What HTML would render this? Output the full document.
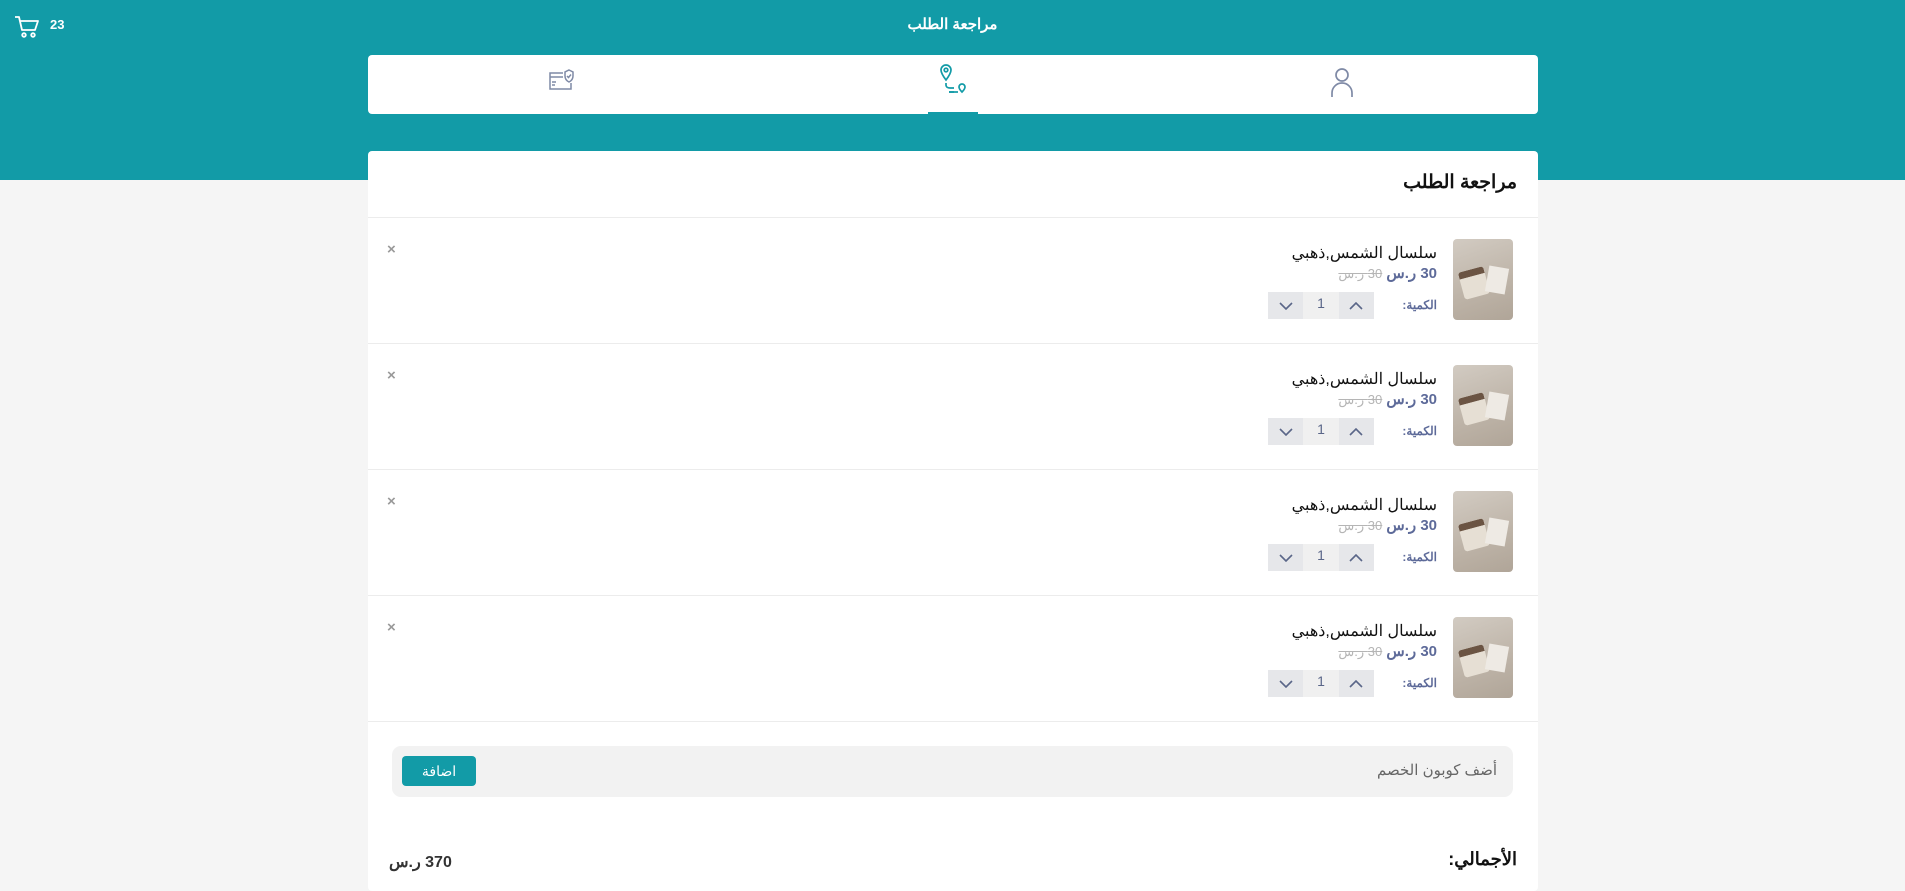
<!DOCTYPE html>
<html><head><meta charset="utf-8"><style>
*{margin:0;padding:0;box-sizing:border-box}
body{width:1905px;height:880px;overflow:hidden;background:#f5f5f5;font-family:"Liberation Sans","Noto Sans CJK SC",sans-serif;position:relative;color:#111}
.hdr{position:absolute;left:0;top:0;width:1905px;height:180px;background:#129ba7}
.abs{position:absolute}
.title{left:0;width:1905px;top:15px;text-align:center;color:#fff;font-weight:bold;font-size:15px}
.tabs{left:368px;top:55px;width:1170px;height:59px;background:#fff;border-radius:4px}
.card{left:368px;top:151px;width:1170px;height:740px;background:#fff;border-radius:4px}
.h2{right:21px;top:20px;font-size:19px;font-weight:bold;direction:rtl}
.div{left:0;width:1170px;height:1px;background:#ececec}
.thumb{width:60px;height:81px;border-radius:4px;background:linear-gradient(160deg,#d2cbc2,#bdb3a7 60%,#b0a598);overflow:hidden}
.name{font-size:16px;direction:rtl;text-align:right}
.price{font-size:15px;direction:rtl;text-align:right}
.stp{width:106px;height:27px;background:#f0f0f0;border-radius:4px;display:flex}
.stp div{flex:1;display:flex;align-items:center;justify-content:center;font-size:14px;color:#5a6688}
.stp div.b{background:#e6e7ea}
.x{font-size:15px;color:#999;font-weight:bold}
</style></head><body>
<div class="hdr"></div>
<svg class="abs" style="left:14px;top:15px" width="26" height="24" viewBox="0 0 26 24" fill="none" stroke="#fff" stroke-width="1.8" stroke-linejoin="round"><path d="M1 2h4l3 13h13l3-9H6.5"/><circle cx="10" cy="20" r="1.8"/><circle cx="19" cy="20" r="1.8"/></svg>
<div class="abs" style="left:50px;top:17px;color:#fff;font-weight:bold;font-size:13px">23</div>
<div class="abs title" dir="rtl">مراجعة الطلب</div>
<div class="abs tabs">
 <svg class="abs" style="left:181px;top:14px" width="26" height="22" viewBox="0 0 26 22" fill="none" stroke="#7f8aa6" stroke-width="1.5"><path d="M14 4H1v16h21v-6"/><path d="M1 8h13M3 13h4M3 16h3"/><path d="M20 1l4 2v4c0 3-2 5-4 6-2-1-4-3-4-6V3z"/><path d="M18 7l1.5 1.5L22 5.5"/></svg>
 <svg class="abs" style="left:571px;top:8px" width="30" height="32" viewBox="0 0 30 32" fill="none" stroke="#129ba7" stroke-width="1.7"><path d="M7 17C4 13 2 10 2 7a5 5 0 0110 0c0 3-2 6-5 10z"/><circle cx="7" cy="7" r="1.8"/><path d="M7 20v2c0 2 2 3 4 3h4M15 29H10"/><path d="M23 29c-2-2-3-4-3-5a3 3 0 016 0c0 1-1 3-3 5z"/><path d="M10 29h9"/></svg>
 <svg class="abs" style="left:962px;top:12px" width="24" height="32" viewBox="0 0 24 32" fill="none" stroke="#7f8aa6" stroke-width="1.7"><circle cx="12" cy="8" r="6"/><path d="M2 30v-4a10 10 0 0120 0v4"/></svg>
 <div class="abs" style="left:560px;top:57px;width:50px;height:2px;background:#129ba7"></div>
</div>
<div class="abs card">
 <div class="abs h2">مراجعة الطلب</div>
 <div class="abs div" style="top:66px"></div>
 <div id="items"></div>
 <div class="abs" style="left:24px;top:595px;width:1121px;height:51px;background:#f2f2f2;border-radius:9px">
  <div class="abs" style="right:16px;top:15px;font-size:15px;color:#666;direction:rtl">أضف كوبون الخصم</div>
  <div class="abs" style="left:10px;top:10px;width:74px;height:30px;background:#129ba7;border-radius:4px;color:#fff;font-size:14px;text-align:center;line-height:30px">اضافة</div>
 </div>
 <div class="abs" style="right:21px;top:698px;font-size:18px;font-weight:bold;direction:rtl">الأجمالي:</div>
 <div class="abs" style="left:21px;top:701px;font-size:16px;font-weight:bold;color:#333;direction:rtl">370 ر.س</div>
</div>
<script>
var h='';for(var i=0;i<4;i++){var t=i*126;
h+='<div class="abs thumb" style="left:1085px;top:'+(88+t)+'px"><div class="abs" style="left:8px;top:30px;width:26px;height:28px;background:#e6dfd4;border-radius:3px;transform:rotate(-15deg);border-top:7px solid #6b5443"></div><div class="abs" style="left:34px;top:28px;width:20px;height:26px;background:#eeeae4;transform:rotate(10deg)"></div></div>';
h+='<div class="abs name" style="right:101px;top:'+(92+t)+'px">سلسال الشمس,ذهبي</div>';
h+='<div class="abs price" style="right:101px;top:'+(113+t)+'px"><b style="color:#5d6a99">30 ر.س</b> <s style="color:#b5b5b5;font-size:13px">30 ر.س</s></div>';
h+='<div class="abs" style="right:101px;top:'+(147+t)+'px;font-size:12px;font-weight:bold;color:#5d6a99;direction:rtl">الكمية:</div>';
h+='<div class="abs stp" style="left:900px;top:'+(141+t)+'px"><div class="b"><svg width="14" height="8" viewBox="0 0 14 8" fill="none" stroke="#5a6688" stroke-width="1.6"><path d="M1 1l6 6 6-6"/></svg></div><div style="align-items:flex-start;padding-top:3px">1</div><div class="b"><svg width="14" height="8" viewBox="0 0 14 8" fill="none" stroke="#5a6688" stroke-width="1.6"><path d="M1 7l6-6 6 6"/></svg></div></div>';
h+='<div class="abs x" style="left:19px;top:'+(90+t)+'px">×</div>';
h+='<div class="abs div" style="top:'+(192+t)+'px"></div>';}
document.getElementById('items').outerHTML=h;
</script>
</body></html>
